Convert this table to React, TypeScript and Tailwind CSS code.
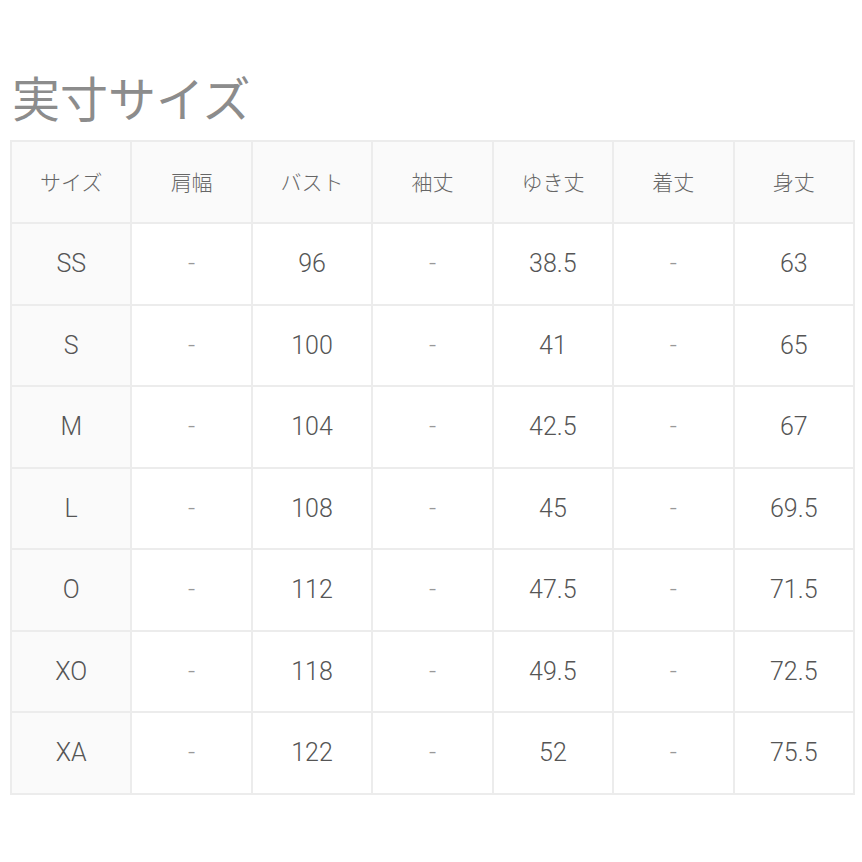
const headers = ['サイズ', '肩幅', 'バスト', '袖丈', 'ゆき丈', '着丈', '身丈'];

const rows = [
  ['SS', '-', '96', '-', '38.5', '-', '63'],
  ['S', '-', '100', '-', '41', '-', '65'],
  ['M', '-', '104', '-', '42.5', '-', '67'],
  ['L', '-', '108', '-', '45', '-', '69.5'],
  ['O', '-', '112', '-', '47.5', '-', '71.5'],
  ['XO', '-', '118', '-', '49.5', '-', '72.5'],
  ['XA', '-', '122', '-', '52', '-', '75.5'],
];

export default function App() {
  return (
    <div
      className="w-[862px] h-[862px] bg-white px-[10px] pt-[66px]"
      style={{ fontFamily: '"Noto Sans CJK JP", "Noto Sans", sans-serif' }}
    >
      <h2 className="text-[48px] leading-[60px] text-[#8c8c8c] font-normal pl-[2px] mb-[14px]">実寸サイズ</h2>
      <table className="w-[845px] border-collapse table-fixed">
        <thead>
          <tr className="h-[82px] bg-[#fafafa]">
            {headers.map((h) => (
              <th key={h} className="border-2 border-[#ececec] text-[21px] font-light text-[#666] text-center">
                {h}
              </th>
            ))}
          </tr>
        </thead>
        <tbody>
          {rows.map((r) => (
            <tr key={r[0]} className="h-[81.5px]">
              {r.map((c, i) => (
                <td
                  key={i}
                  style={{ fontFamily: 'Roboto, "Noto Sans CJK JP", sans-serif' }}
                  className={
                    'border-2 border-[#ececec] text-center font-light text-[25px] ' +
                    (i === 0 ? 'bg-[#fafafa] text-[#555]' : c === '-' ? 'text-[#999]' : 'text-[#555]')
                  }
                >
                  {c}
                </td>
              ))}
            </tr>
          ))}
        </tbody>
      </table>
    </div>
  );
}
